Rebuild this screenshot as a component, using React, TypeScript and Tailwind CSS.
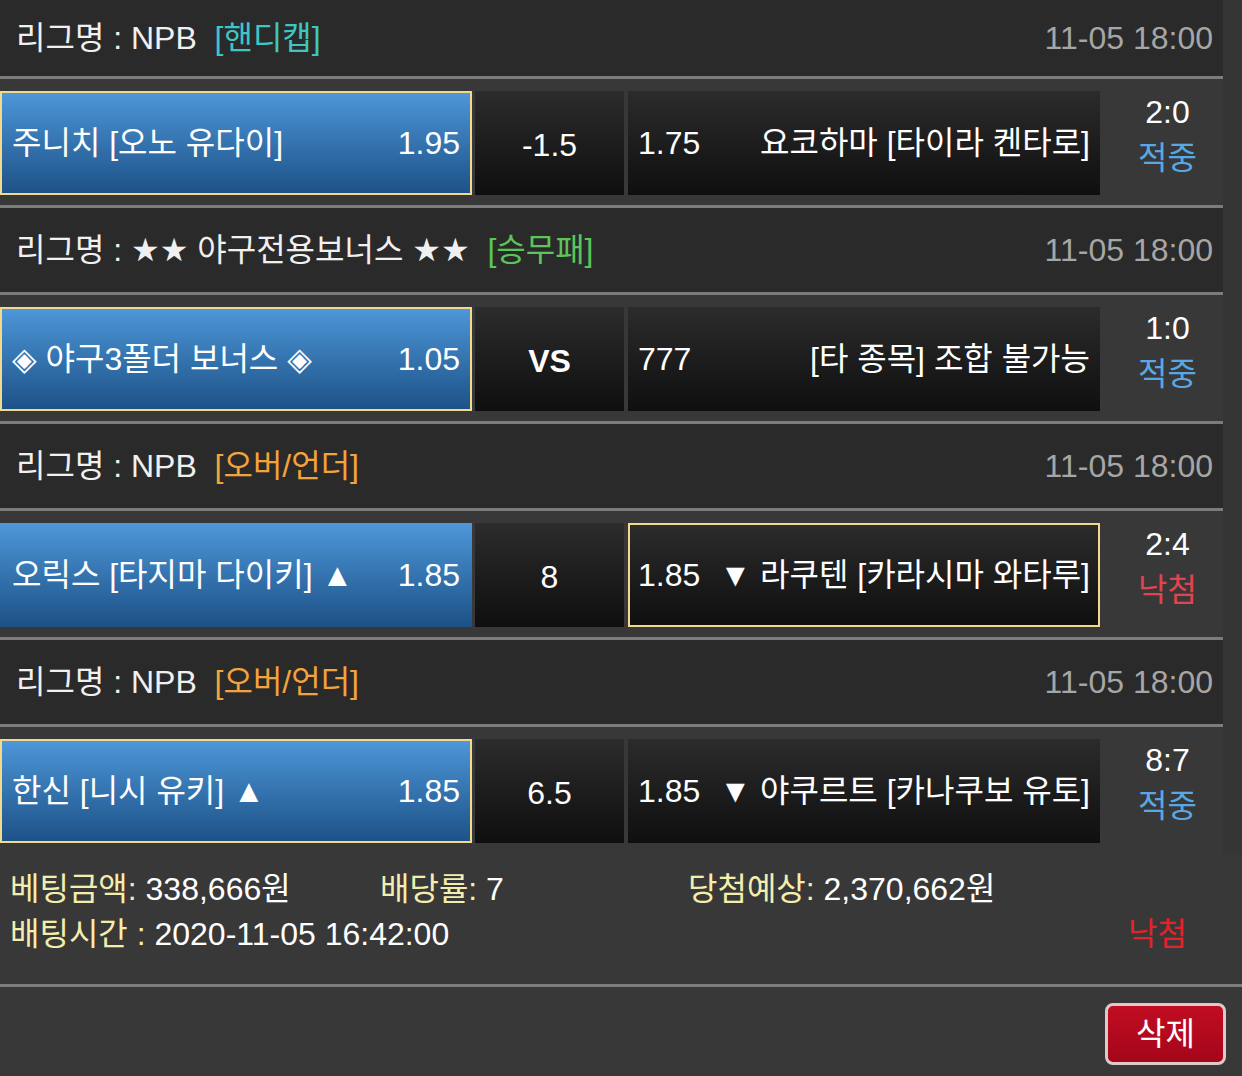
import React from "react";

type Bet = {
  league: string;
  tag: string;
  tagColor: string;
  home: string;
  homeOdds: string;
  mid: string;
  midBold?: boolean;
  awayOdds: string;
  away: string;
  pick: "home" | "away";
  score: string;
  hit: boolean;
};

const bets: Bet[] = [
  {
    league: "NPB",
    tag: "[핸디캡]",
    tagColor: "text-[#3ec6c4]",
    home: "주니치 [오노 유다이]",
    homeOdds: "1.95",
    mid: "-1.5",
    awayOdds: "1.75",
    away: "요코하마 [타이라 켄타로]",
    pick: "home",
    score: "2:0",
    hit: true,
  },
  {
    league: "★★ 야구전용보너스 ★★",
    tag: "[승무패]",
    tagColor: "text-[#5cc55a]",
    home: "◈ 야구3폴더 보너스 ◈",
    homeOdds: "1.05",
    mid: "VS",
    midBold: true,
    awayOdds: "777",
    away: "[타 종목] 조합 불가능",
    pick: "home",
    score: "1:0",
    hit: true,
  },
  {
    league: "NPB",
    tag: "[오버/언더]",
    tagColor: "text-[#f2a33c]",
    home: "오릭스 [타지마 다이키] ▲",
    homeOdds: "1.85",
    mid: "8",
    awayOdds: "1.85",
    away: "▼ 라쿠텐 [카라시마 와타루]",
    pick: "away",
    score: "2:4",
    hit: false,
  },
  {
    league: "NPB",
    tag: "[오버/언더]",
    tagColor: "text-[#f2a33c]",
    home: "한신 [니시 유키] ▲",
    homeOdds: "1.85",
    mid: "6.5",
    awayOdds: "1.85",
    away: "▼ 야쿠르트 [카나쿠보 유토]",
    pick: "home",
    score: "8:7",
    hit: true,
  },
];

function LeagueHeader({ bet, first }: { bet: Bet; first: boolean }) {
  return (
    <div
      className={`flex items-center justify-between border-b-[3px] border-[#7c7c7c] bg-[#2a2a2a] pl-4 pr-[10px] ${
        first ? "h-[79px]" : "h-[87px]"
      }`}
    >
      <div className="whitespace-pre text-[#f0f0f0]">
        {`리그명 : ${bet.league}  `}
        <span className={bet.tagColor}>{bet.tag}</span>
      </div>
      <div className="text-[#a6a6a6]">11-05 18:00</div>
    </div>
  );
}

function BetRow({ bet, last }: { bet: Bet; last: boolean }) {
  const homeSel = bet.pick === "home";
  const awaySel = bet.pick === "away";
  return (
    <div
      className={`flex pt-3 ${
        last ? "h-[128px] pb-3" : "h-[129px] border-b-[3px] border-[#7c7c7c] pb-[10px]"
      }`}
    >
      <div
        className={`flex w-[472px] items-center justify-between border-2 bg-linear-to-b bg-origin-border from-[#4e98da] to-[#1c5186] px-[10px] text-white ${
          homeSel ? "border-[#f3d98b]" : "border-transparent"
        }`}
      >
        <span>{bet.home}</span>
        <span>{bet.homeOdds}</span>
      </div>
      <div
        className={`ml-[3px] flex w-[149px] items-center justify-center bg-linear-to-b from-[#2c2c2c] to-[#0f0f0f] pt-1 text-white ${
          bet.midBold ? "font-bold" : ""
        }`}
      >
        {bet.mid}
      </div>
      <div
        className={`ml-1 flex w-[472px] items-center justify-between border-2 bg-linear-to-b bg-origin-border from-[#2c2c2c] to-[#0f0f0f] px-2 text-white ${
          awaySel ? "border-[#f3d98b]" : "border-transparent"
        }`}
      >
        <span>{bet.awayOdds}</span>
        <span>{bet.away}</span>
      </div>
      <div className="flex flex-1 flex-col items-center justify-center pb-4 pl-3 leading-[46px]">
        <span className="text-white">{bet.score}</span>
        <span className={bet.hit ? "text-[#5aa8e2]" : "text-[#e2434f]"}>
          {bet.hit ? "적중" : "낙첨"}
        </span>
      </div>
    </div>
  );
}

export default function App() {
  return (
    <div
      className="min-h-screen bg-[#383838] text-[32px] leading-none"
      style={{ fontFamily: '"Liberation Sans", "DejaVu Sans", "Noto Sans CJK KR", sans-serif' }}
    >
      <div className="flex">
        <div className="w-[1223px] shrink-0">
          {bets.map((bet, i) => (
            <div key={i}>
              <LeagueHeader bet={bet} first={i === 0} />
              <BetRow bet={bet} last={i === bets.length - 1} />
            </div>
          ))}
        </div>
        <div className="flex-1 bg-[#353535]" />
      </div>

      <div className="border-b-[3px] border-[#7c7c7c] pb-[27px] pl-[10px] pr-[55px] pt-3 leading-[45px]">
        <div className="flex text-white">
          <div className="w-[370px]">
            <span className="text-[#f4eeae]">베팅금액:</span> 338,666원
          </div>
          <div className="w-[308px]">
            <span className="text-[#f4eeae]">배당률:</span> 7
          </div>
          <div>
            <span className="text-[#f4eeae]">당첨예상:</span> 2,370,662원
          </div>
        </div>
        <div className="flex items-center justify-between">
          <div className="text-white">
            <span className="text-[#f4eeae]">배팅시간 :</span> 2020-11-05 16:42:00
          </div>
          <span className="text-[#e4222a]">낙첨</span>
        </div>
      </div>

      <div className="flex justify-end pr-4 pt-4">
        <button
          type="button"
          className="flex h-[62px] w-[121px] items-center justify-center rounded-lg border-[3px] border-[#dccaca] bg-linear-to-b from-[#c10d22] to-[#a4061a] text-white"
        >
          삭제
        </button>
      </div>
    </div>
  );
}
